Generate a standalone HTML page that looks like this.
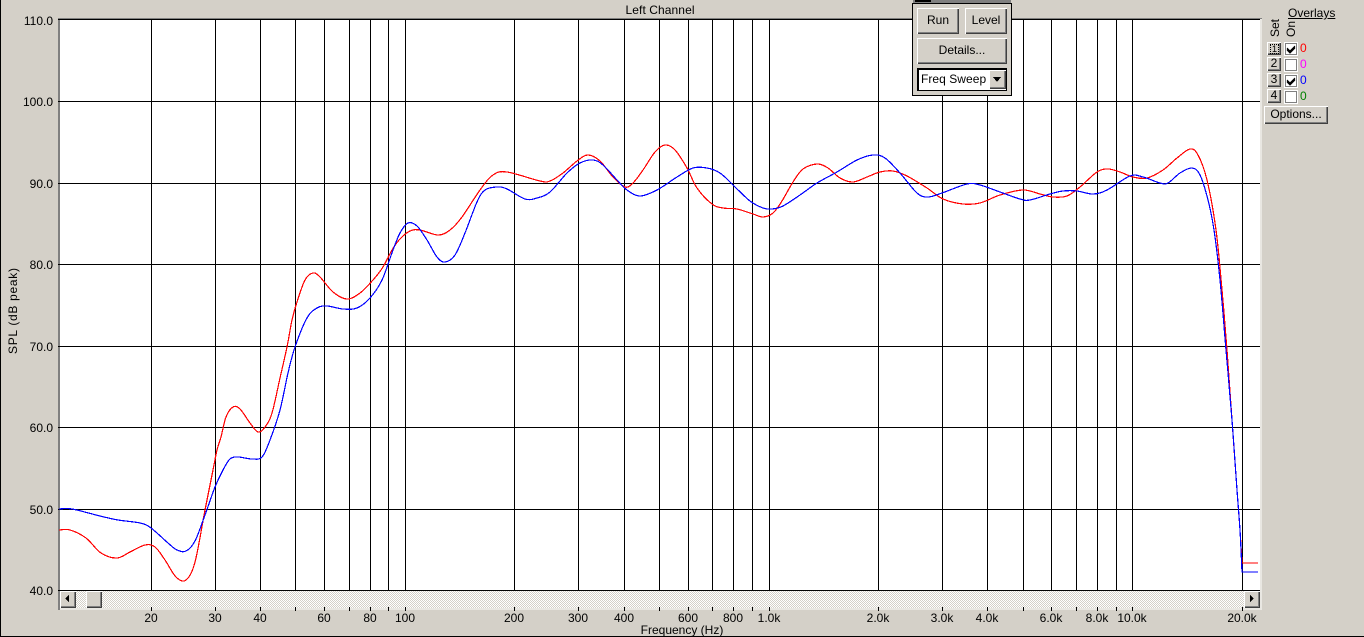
<!DOCTYPE html>
<html><head><meta charset="utf-8"><style>
html,body{margin:0;padding:0;width:1364px;height:637px;overflow:hidden;background:#d4d0c8}
body{position:relative;font:12px "Liberation Sans",Arial,sans-serif;color:#000}
svg{position:absolute;left:0;top:0}
svg text{font:12px "Liberation Sans",Arial,sans-serif;fill:#000}
.b{position:absolute;box-sizing:border-box;background:#d4d0c8;text-align:center;box-shadow:inset 1px 1px 0 #fff,inset -1px -1px 0 #404040,inset -2px -2px 0 #808080;white-space:nowrap}
.a{position:absolute;white-space:nowrap;line-height:14px}
.c{position:absolute;left:1284px;width:14px;height:14px;box-sizing:border-box;background:#fff;border:1px solid #fff;box-shadow:inset 0 0 0 1px #808080}
.n{position:absolute;left:1300px;line-height:14px}
</style></head><body>
<svg width="1364" height="637" viewBox="0 0 1364 637">
<defs><pattern id="d" width="2" height="2" patternUnits="userSpaceOnUse"><rect width="2" height="2" fill="#fff"/><rect width="1" height="1" fill="#d4d0c8"/><rect x="1" y="1" width="1" height="1" fill="#d4d0c8"/></pattern></defs>
<rect x="0" y="0" width="1" height="637" fill="#000"/>
<rect x="0" y="636" width="1364" height="1" fill="#000"/>
<rect x="58" y="18" width="1204" height="592" fill="#e9e7e2"/>
<rect x="58" y="18" width="1204" height="1" fill="#808080"/>
<rect x="58" y="18" width="2" height="592" fill="#808080"/>
<rect x="60" y="19" width="1200" height="572" fill="#fff"/>
<rect x="60" y="591" width="1200" height="17" fill="url(#d)"/>
<g shape-rendering="crispEdges" stroke="#000" stroke-width="1" fill="none">
<path d="M58 19.500H1260M58 101.500H1260M58 183.500H1260M58 264.500H1260M58 346.500H1260M58 427.500H1260M58 509.500H1260M58 590.500H1260"/>
<path d="M151.500 20V591M215.500 20V591M260.500 20V591M295.500 20V591M324.500 20V591M349.500 20V591M370.500 20V591M388.500 20V591M405.500 20V591M514.500 20V591M578.500 20V591M624.500 20V591M659.500 20V591M688.500 20V591M712.500 20V591M733.500 20V591M752.500 20V591M769.500 20V591M878.500 20V591M942.500 20V591M987.500 20V591M1023.500 20V591M1051.500 20V591M1076.500 20V591M1097.500 20V591M1116.500 20V591M1132.500 20V591M1242.500 20V591"/>
<path d="M151.500 607V611M215.500 607V611M260.500 607V611M295.500 607V611M324.500 607V611M349.500 607V611M370.500 607V611M388.500 607V611M405.500 607V611M514.500 607V611M578.500 607V611M624.500 607V611M659.500 607V611M688.500 607V611M712.500 607V611M733.500 607V611M752.500 607V611M769.500 607V611M878.500 607V611M942.500 607V611M987.500 607V611M1023.500 607V611M1051.500 607V611M1076.500 607V611M1097.500 607V611M1116.500 607V611M1132.500 607V611M1242.500 607V611"/>
</g>
<polyline class="curve" fill="none" stroke="#f00" stroke-width="1.2" shape-rendering="crispEdges" points="59,530 70,530 86,538 101,553 117,558 130,552 145,545 155,547 165,560 176,577 186,580 195,562 205,510 213,470 217,450 221,437 226,417 233,407 240,409 250,423 258,432 265,427 272,413 280,378 287,347 292,320 297,302 305,280 313,273 320,277 333,292 347,299 360,293 373,280 383,267 392,250 400,239 410,231 420,230 438,235 450,230 462,217 480,190 493,175 507,172 540,181 550,181 563,173 577,161 588,155 600,161 613,177 625,187 633,183 643,170 655,152 665,145 675,150 687,168 697,188 712,204 723,208 737,209 753,214 763,217 773,213 782,201 793,182 803,169 817,164 828,168 840,178 853,182 867,177 880,172 893,171 907,176 927,188 943,199 963,204 980,203 1000,195 1023,190 1040,194 1053,197 1067,196 1080,187 1097,172 1108,169 1120,172 1133,177 1147,178 1163,170 1177,158 1190,149 1198,155 1207,180 1216,230 1222,290 1227,350 1232,420 1237,490 1240,530 1242,563 1258,563"/>
<polyline class="curve" fill="none" stroke="#00f" stroke-width="1.2" shape-rendering="crispEdges" points="59,509 72,509 100,516 118,520 140,523 151,528 168,543 177,550 186,551 195,541 205,515 215,487 223,470 230,459 238,457 252,459 262,457 270,440 280,410 288,373 295,347 307,318 317,308 327,306 343,309 357,308 370,298 382,280 393,250 400,233 408,223 417,226 427,240 437,257 445,262 455,255 465,233 477,202 485,190 497,187 507,189 525,199 537,198 550,192 567,173 580,163 593,160 603,165 617,180 627,190 640,196 657,190 677,177 693,168 707,168 720,173 733,185 750,201 763,208 772,209 783,206 800,195 817,183 837,172 857,160 873,155 885,158 900,173 917,193 928,197 942,193 967,184 980,185 1000,192 1020,199 1030,200 1050,194 1063,191 1077,191 1093,194 1107,190 1130,176 1143,177 1160,183 1168,183 1180,173 1192,168 1200,175 1208,200 1214,230 1220,280 1226,350 1232,420 1237,490 1240,530 1242,572 1258,572"/>
<g text-anchor="end">
<text x="53" y="25">110.0</text><text x="53" y="106">100.0</text><text x="53" y="188">90.0</text><text x="53" y="269">80.0</text><text x="53" y="351">70.0</text><text x="53" y="432">60.0</text><text x="53" y="514">50.0</text><text x="53" y="595">40.0</text>
</g>
<g text-anchor="middle">
<text x="151" y="622">20</text><text x="215" y="622">30</text><text x="260" y="622">40</text><text x="324" y="622">60</text><text x="370" y="622">80</text><text x="405" y="622">100</text><text x="514" y="622">200</text><text x="578" y="622">300</text><text x="624" y="622">400</text><text x="688" y="622">600</text><text x="733" y="622">800</text><text x="769" y="622">1.0k</text><text x="878" y="622">2.0k</text><text x="942" y="622">3.0k</text><text x="987" y="622">4.0k</text><text x="1051" y="622">6.0k</text><text x="1097" y="622">8.0k</text><text x="1132" y="622">10.0k</text><text x="1242" y="622">20.0k</text>
<text x="682" y="634">Frequency (Hz)</text>
<text x="660" y="14" textLength="69">Left Channel</text>
<text transform="translate(17,311) rotate(-90)" textLength="86">SPL (dB peak)</text>
</g>
<text transform="translate(1279,37) rotate(-90)">Set</text>
<text transform="translate(1295,37) rotate(-90)">On</text>
<!-- panel -->
<rect x="912" y="0" width="100" height="96" fill="#d4d0c8"/>
<rect x="912.500" y="3.500" width="99" height="92" fill="none" stroke="#000" stroke-width="1" shape-rendering="crispEdges"/>
<rect x="913" y="0" width="98" height="3" fill="#808080"/>
<rect x="915" y="0" width="16" height="2" fill="#000"/>
</svg>
<div class="b" style="left:60px;top:591px;width:16px;height:17px"></div>
<div class="b" style="left:86px;top:591px;width:16px;height:17px"></div>
<div class="b" style="left:1244px;top:591px;width:16px;height:17px"></div>
<svg style="left:0;top:0" width="1364" height="637"><path d="M65 598.500L69 595V602Z" fill="#000" shape-rendering="crispEdges"/><path d="M1254 598.500L1250 595V602Z" fill="#000" shape-rendering="crispEdges"/></svg>
<div class="b" style="left:917px;top:8px;width:42px;height:26px;line-height:25px">Run</div>
<div class="b" style="left:965px;top:8px;width:42px;height:26px;line-height:25px">Level</div>
<div class="b" style="left:917px;top:38px;width:90px;height:26px;line-height:25px">Details...</div>
<div style="position:absolute;left:917px;top:68px;width:90px;height:23px;box-sizing:border-box;border:1px solid #000;background:#fff;line-height:21px;padding-left:3px;box-shadow:inset 1px 1px 0 #000;letter-spacing:.05px">Freq Sweep</div>
<div class="b" style="left:989px;top:70px;width:17px;height:19px"></div>
<svg width="1364" height="637"><path d="M993 77H1001L997 82Z" fill="#000" shape-rendering="crispEdges"/></svg>
<div class="a" style="left:1288px;top:6px;text-decoration:underline">Overlays</div>
<div class="b" style="left:1267px;top:42px;width:14px;height:13px"><div style="position:absolute;left:3px;top:2px;width:7px;height:8px;border:1px dotted #000;font-size:9px;line-height:8px">1</div></div>
<div class="b" style="left:1267px;top:57px;width:14px;height:14px;line-height:13px">2</div>
<div class="b" style="left:1267px;top:73px;width:14px;height:14px;line-height:13px">3</div>
<div class="b" style="left:1267px;top:89px;width:14px;height:14px;line-height:13px">4</div>
<div class="c" style="top:42px"></div><div class="c" style="top:58px"></div><div class="c" style="top:74px"></div><div class="c" style="top:90px"></div>
<svg width="1364" height="637"><path d="M1287 48L1290 51L1295 46M1287 49L1290 52L1295 47M1287 50L1290 53L1295 48M1287 80L1290 83L1295 78M1287 81L1290 84L1295 79M1287 82L1290 85L1295 80" fill="none" stroke="#000" stroke-width="1"/></svg>
<div class="n" style="top:41px;color:#f00">0</div>
<div class="n" style="top:57px;color:#f0f">0</div>
<div class="n" style="top:73px;color:#00f">0</div>
<div class="n" style="top:89px;color:#008000">0</div>
<div class="b" style="left:1264px;top:106px;width:64px;height:18px;line-height:17px">Options...</div>
<script>
document.querySelectorAll('polyline.curve').forEach(function(l){
  var p=l.getAttribute('points').trim().split(/\s+/).map(function(s){return s.split(',').map(Number)});
  var n=p.length-1,d='M'+p[0][0]+' '+p[0][1];
  for(var i=0;i<n-1;i++){
    var a=p[Math.max(i-1,0)],b=p[i],c=p[i+1],e=p[Math.min(i+2,n-1)];
    d+='C'+(b[0]+(c[0]-a[0])/6)+' '+(b[1]+(c[1]-a[1])/6)+' '+(c[0]-(e[0]-b[0])/6)+' '+(c[1]-(e[1]-b[1])/6)+' '+c[0]+' '+c[1];
  }
  d+='L'+p[n][0]+' '+p[n][1];
  var s=document.createElementNS('http://www.w3.org/2000/svg','path');
  s.setAttribute('d',d);
  ['fill','stroke','stroke-width','shape-rendering'].forEach(function(k){s.setAttribute(k,l.getAttribute(k))});
  l.parentNode.replaceChild(s,l);
});
</script>
</body></html>
